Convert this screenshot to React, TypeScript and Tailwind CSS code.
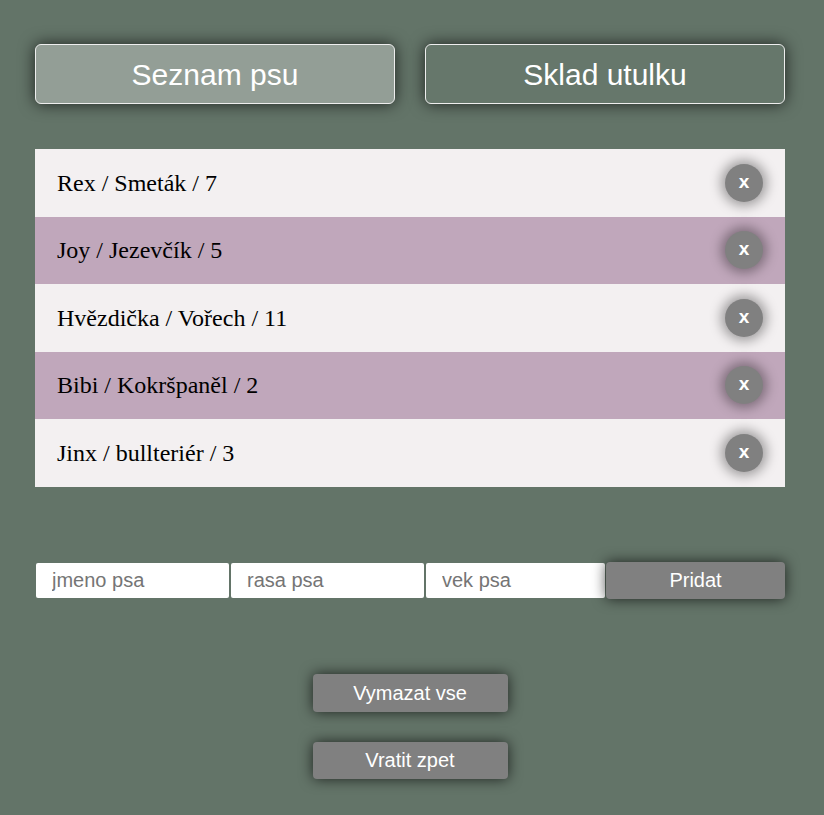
import React from "react";

const dogs = [
  "Rex / Smeták / 7",
  "Joy / Jezevčík / 5",
  "Hvězdička / Vořech / 11",
  "Bibi / Kokršpaněl / 2",
  "Jinx / bullteriér / 3",
];

export default function App() {
  return (
    <div className="min-h-[815px] w-full bg-[#637468] font-['Liberation_Sans',Arial,sans-serif]">
      <div className="ml-[35px] w-[750px] pt-[44px]">
        <div className="flex gap-[30px]">
          <button className="h-[60px] w-[360px] rounded-[6px] border border-[#eeeeee] bg-[#939e96] text-[30px] text-white shadow-[0_0_16px_rgba(0,0,0,0.7)]">
            Seznam psu
          </button>
          <button className="h-[60px] w-[360px] rounded-[6px] border border-[#eeeeee] bg-[#66776b] text-[30px] text-white shadow-[0_0_16px_rgba(0,0,0,0.7)]">
            Sklad utulku
          </button>
        </div>

        <div className="mt-[45px] flex flex-col">
          {dogs.map((d, i) => (
            <div
              key={d}
              className={
                "flex h-[67.5px] items-center justify-between pl-[22px] pr-[22px] " +
                (i % 2 === 0 ? "bg-[#f3f0f1]" : "bg-[#c0a7bb]")
              }
            >
              <span className="font-['Liberation_Serif','Times_New_Roman',serif] text-[24px] text-black">
                {d}
              </span>
              <button className="flex h-[38px] w-[38px] items-center justify-center rounded-full bg-[#808080] pb-[2px] text-[19px] font-bold text-white shadow-[0_0_12px_4px_rgba(0,0,0,0.35)]">
                x
              </button>
            </div>
          ))}
        </div>

        <div className="mt-[75px] flex items-center">
          <input
            placeholder="jmeno psa"
            className="ml-[1px] h-[35px] w-[193px] rounded-[2px] bg-white pl-[16px] text-[20px] text-black outline-none placeholder:text-[#757575]"
          />
          <input
            placeholder="rasa psa"
            className="ml-[2px] h-[35px] w-[193px] rounded-[2px] bg-white pl-[16px] text-[20px] text-black outline-none placeholder:text-[#757575]"
          />
          <input
            placeholder="vek psa"
            className="ml-[2px] h-[35px] w-[179px] rounded-[2px] bg-white pl-[16px] text-[20px] text-black outline-none placeholder:text-[#757575]"
          />
          <button className="relative ml-[1px] h-[37px] w-[179px] rounded-[4px] bg-[#808080] text-[20px] text-white shadow-[0_0_14px_rgba(0,0,0,0.7)]">
            Pridat
          </button>
        </div>

        <div className="mt-[75px] flex flex-col items-center gap-[30px]">
          <button className="h-[38px] w-[195px] rounded-[4px] bg-[#808080] text-[20px] text-white shadow-[0_0_14px_rgba(0,0,0,0.7)]">
            Vymazat vse
          </button>
          <button className="h-[37px] w-[195px] rounded-[4px] bg-[#808080] text-[20px] text-white shadow-[0_0_14px_rgba(0,0,0,0.7)]">
            Vratit zpet
          </button>
        </div>
      </div>
    </div>
  );
}
